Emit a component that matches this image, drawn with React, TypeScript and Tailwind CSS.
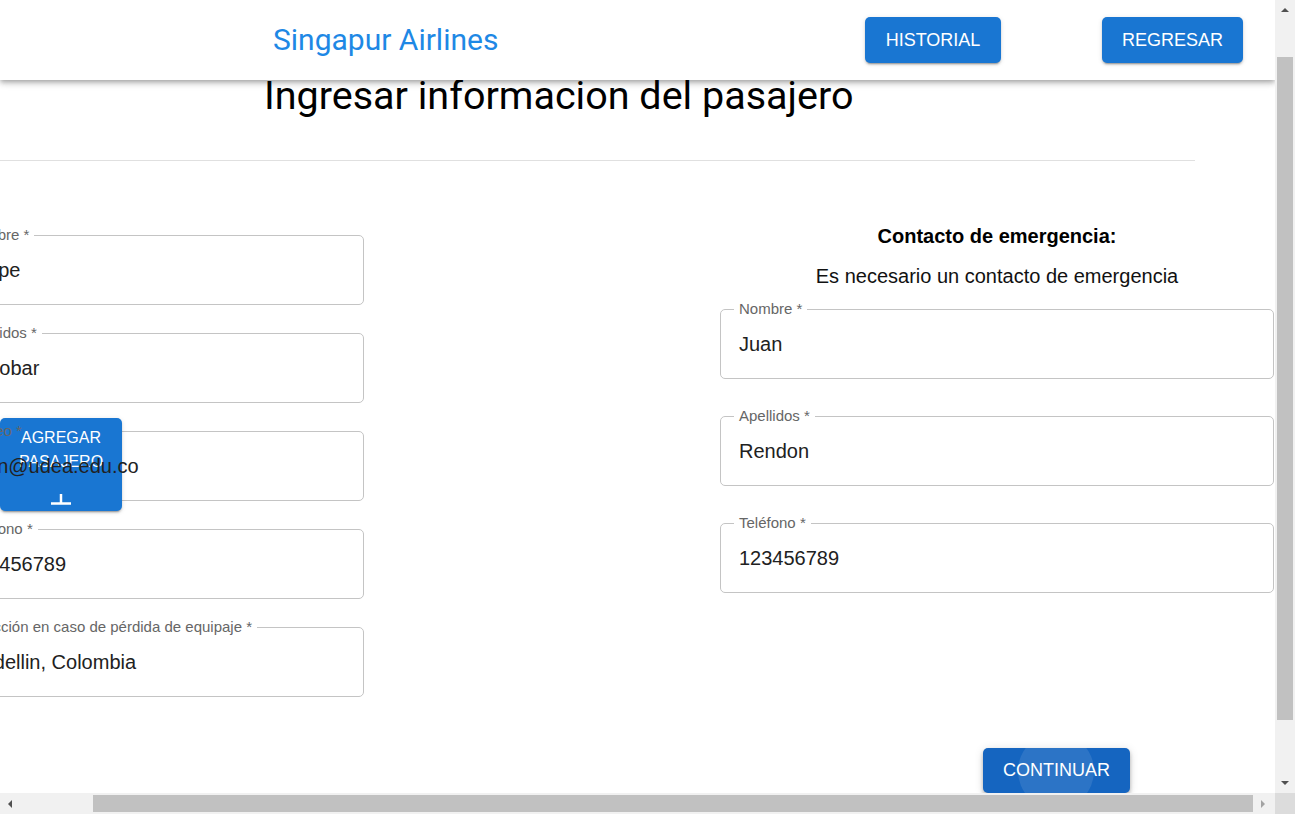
import React from 'react';

const sans = "font-['Liberation_Sans',Arial,sans-serif]";

type FieldProps = { label: string; value: string };

const Field: React.FC<FieldProps> = ({ label, value }) => (
  <fieldset className="relative m-0 h-[79px] rounded-[5px] border border-[#c4c4c4] pl-[13px] pr-[13px] pb-0 pt-0">
    <legend className="relative z-20 px-[5px] text-[15px] leading-[18px] text-[#666666]">{label}</legend>
    <div className="relative z-20 pl-[5px] pt-[16px] text-[20px] leading-[20px] text-[#212121] whitespace-nowrap">
      {value}
    </div>
  </fieldset>
);

const passenger = [
  { label: 'Nombre *', value: 'Felipe' },
  { label: 'Apellidos *', value: 'Escobar' },
  { label: 'Correo *', value: 'lujan@udea.edu.co' },
  { label: 'Teléfono *', value: '123456789' },
  { label: 'Dirección en caso de pérdida de equipaje *', value: 'Medellin, Colombia' },
];

const emergency = [
  { label: 'Nombre *', value: 'Juan' },
  { label: 'Apellidos *', value: 'Rendon' },
  { label: 'Teléfono *', value: '123456789' },
];

const Arrow: React.FC<{ dir: 'up' | 'down' | 'left' | 'right' }> = ({ dir }) => {
  const pts = {
    up: '0,5 4,1 8,5',
    down: '0,1 8,1 4,5',
    left: '5,0 5,8 1,4',
    right: '1,0 1,8 5,4',
  }[dir];
  const w = dir === 'up' || dir === 'down' ? 8 : 6;
  const h = dir === 'up' || dir === 'down' ? 6 : 8;
  return (
    <svg width={w} height={h} viewBox={`0 0 ${w} ${h}`}>
      <polygon points={pts} fill={dir === 'right' ? '#a3a3a3' : '#505050'} />
    </svg>
  );
};

const App: React.FC = () => {
  return (
    <div className={`w-[1295px] h-[814px] flex flex-col overflow-hidden bg-white ${sans}`}>
      <div className="flex flex-1 min-h-0">
        {/* page, scrolled to the right */}
        <div className="relative w-[1275px] h-[793px] overflow-hidden">
          <header className="relative z-30 flex h-[80px] items-center bg-white shadow-[0_2px_4px_-1px_rgba(0,0,0,0.2),0_4px_5px_0_rgba(0,0,0,0.14),0_1px_10px_0_rgba(0,0,0,0.12)]">
            <span className="pl-[273px] font-['Roboto',sans-serif] text-[30px] leading-[36px] text-[#1e88e5]">
              Singapur Airlines
            </span>
            <div className="flex-1" />
            <button className="h-[46px] w-[136px] rounded-[5px] bg-[#1976d2] text-[18px] font-medium uppercase text-white shadow-[0_3px_1px_-2px_rgba(0,0,0,0.2),0_2px_2px_0_rgba(0,0,0,0.14),0_1px_5px_0_rgba(0,0,0,0.12)]">
              Historial
            </button>
            <div className="w-[101px]" />
            <button className="mr-[32px] h-[46px] w-[141px] rounded-[5px] bg-[#1976d2] text-[18px] font-medium uppercase text-white shadow-[0_3px_1px_-2px_rgba(0,0,0,0.2),0_2px_2px_0_rgba(0,0,0,0.14),0_1px_5px_0_rgba(0,0,0,0.12)]">
              Regresar
            </button>
          </header>

          <h1 className="relative z-20 -mt-[5px] pl-[264px] font-['Roboto',sans-serif] text-[39.5px] font-normal leading-[42px] text-black">
            Ingresar informacion del pasajero
          </h1>

          <div className="mt-[43px] h-px w-[1195px] bg-[#e0e0e0]" />

          <div className="flex">
            <div className="-ml-[53px] flex w-[417px] shrink-0 flex-col gap-[19px] pt-[65px]">
              {passenger.map((f) => (
                <Field key={f.label} label={f.label} value={f.value} />
              ))}
            </div>

            <div className="ml-[356px] flex w-[554px] shrink-0 flex-col pt-[63px]">
              <p className="text-center text-[20px] font-bold leading-[24px] text-black">
                Contacto de emergencia:
              </p>
              <p className="mt-[16px] text-center text-[20px] leading-[24px] text-[#111]">
                Es necesario un contacto de emergencia
              </p>
              <div className="mt-[12px] flex flex-col gap-[28px]">
                {emergency.map((f) => (
                  <Field key={f.label} label={f.label} value={f.value} />
                ))}
              </div>
            </div>
          </div>

          <div className="mt-[51px] pl-[983px]">
            <button className="relative h-[45px] w-[147px] overflow-hidden rounded-[5px] bg-[#1565c0] text-[18px] font-medium uppercase text-white shadow-[0_2px_4px_-1px_rgba(0,0,0,0.2),0_4px_5px_0_rgba(0,0,0,0.14),0_1px_10px_0_rgba(0,0,0,0.12)]">
              <span className="absolute left-[35px] top-[-15px] h-[76px] w-[76px] rounded-full bg-white/10" />
              <span className="relative">Continuar</span>
            </button>
          </div>

          {/* floating add-passenger button */}
          <button className="absolute left-0 top-[418px] z-10 flex h-[93px] w-[122px] flex-col items-center overflow-hidden rounded-[5px] bg-[#1976d2] pt-[8px] text-[16px] font-medium uppercase leading-[24px] text-white shadow-[0_3px_1px_-2px_rgba(0,0,0,0.2),0_2px_2px_0_rgba(0,0,0,0.14),0_1px_5px_0_rgba(0,0,0,0.12)]">
            <span>Agregar</span>
            <span>Pasajero</span>
            <svg width="20" height="12" viewBox="0 0 20 12" className="mt-[20px]">
              <path d="M10 0 V10 M0 9.5 H20" stroke="white" strokeWidth="2.5" fill="none" />
            </svg>
          </button>
        </div>

        {/* vertical scrollbar */}
        <div className="flex w-[20px] flex-col items-center bg-[#f1f1f1]">
          <div className="flex h-[20px] items-center justify-center">
            <Arrow dir="up" />
          </div>
          <div className="mt-[37px] h-[663px] w-[16px] bg-[#c1c1c1]" />
          <div className="flex-1" />
          <div className="flex h-[20px] items-center justify-center">
            <Arrow dir="down" />
          </div>
        </div>
      </div>

      {/* horizontal scrollbar */}
      <div className="flex h-[21px] bg-[#f1f1f1]">
        <div className="flex w-[20px] items-center justify-center">
          <Arrow dir="left" />
        </div>
        <div className="ml-[73px] mt-[2px] h-[17px] w-[1160px] bg-[#c1c1c1]" />
        <div className="flex w-[20px] items-center justify-center">
          <Arrow dir="right" />
        </div>
        <div className="ml-[2px] w-[20px] bg-[#dcdcdc]" />
      </div>
    </div>
  );
};

export default App;
